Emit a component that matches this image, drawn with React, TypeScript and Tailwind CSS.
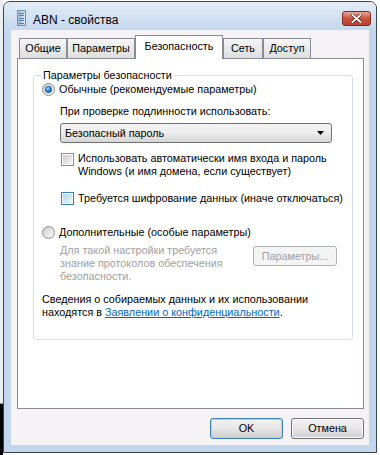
import React from "react";

const Radio = ({ checked }: { checked?: boolean }) => (
  <svg width="13" height="13" viewBox="0 0 13 13" className="shrink-0">
    <defs>
      <linearGradient id={checked ? "rg1" : "rg0"} x1="0" y1="0" x2="1" y2="1">
        <stop offset="0" stopColor="#c9c9c9" />
        <stop offset="1" stopColor="#ffffff" />
      </linearGradient>
      <radialGradient id="rdot" cx="0.4" cy="0.35" r="0.7">
        <stop offset="0" stopColor="#a8dcff" />
        <stop offset="0.5" stopColor="#2f8ad6" />
        <stop offset="1" stopColor="#0c4f8c" />
      </radialGradient>
    </defs>
    <circle cx="6.5" cy="6.5" r="6" fill={`url(#${checked ? "rg1" : "rg0"})`} stroke="#8e8f8f" strokeWidth="1" />
    {checked && <circle cx="6.5" cy="6.5" r="3.2" fill="url(#rdot)" stroke="#1b5b94" strokeWidth="0.6" />}
  </svg>
);

const Check = ({ focus }: { focus?: boolean }) => (
  <div
    className={
      "w-[13px] h-[13px] shrink-0 border p-[1px] bg-white " +
      (focus ? "border-[#3c7fb1]" : "border-[#8f8f8f]")
    }
  >
    <div
      className={
        "w-full h-full bg-gradient-to-br " +
        (focus ? "from-[#a9d7f6] to-[#e8f6fe]" : "from-[#cbcbcb] to-[#f6f6f6]")
      }
    />
  </div>
);

export default function App() {
  return (
    <div className="w-[380px] h-[455px] bg-white flex overflow-hidden font-['Liberation_Sans',Arial,sans-serif] text-[10.8px] leading-[13px] text-black">
      <div className="w-[3px] h-full flex flex-col shrink-0">
        <div className="h-[403px] bg-[#eceff2]" />
        <div className="h-[1px] bg-[#9a9a9a]" />
        <div className="flex-1 bg-black" />
      </div>
      <div className="mt-[1px] w-[374px] h-[452px] shrink-0 rounded-t-[7px] border border-[#3b4550] bg-[#c2d6ee] flex flex-col">
        {/* title bar */}
        <div className="h-[28px] flex items-start rounded-t-[6px] bg-gradient-to-b from-[#e3ecf6] to-[#c6d8ee]">
          <div className="ml-[13px] mt-[8px] w-[9px] h-[16px] border border-[#6e8fb1] bg-gradient-to-r from-[#9db8d6] to-[#dbe7f3] flex flex-col justify-evenly px-[1px]">
            <div className="h-[1px] bg-[#5b7da3]" />
            <div className="h-[1px] bg-[#5b7da3]" />
            <div className="h-[1px] bg-[#5b7da3]" />
            <div className="h-[1px] bg-[#5b7da3]" />
            <div className="h-[1px] bg-[#5b7da3]" />
          </div>
          <div className="ml-[7px] mt-[11px] text-[12px] leading-[14px] text-black">ABN - свойства</div>
          <div className="ml-auto mr-[5px] mt-[9px] w-[29px] h-[15px] rounded-[3px] border border-[#7b2a22] bg-gradient-to-b from-[#e8a596] via-[#c9513f] to-[#b9412f] flex items-center justify-center">
            <svg width="11" height="9" viewBox="0 0 11 9">
              <path d="M1.5 1 L9.5 8 M9.5 1 L1.5 8" stroke="#5a1a14" strokeWidth="3.2" strokeLinecap="square" />
              <path d="M1.5 1 L9.5 8 M9.5 1 L1.5 8" stroke="#ffffff" strokeWidth="1.8" strokeLinecap="square" />
            </svg>
          </div>
        </div>
        {/* client */}
        <div className="mx-[7px] h-[415px] bg-[#f5f3f6] flex flex-col">
          {/* tabs */}
          <div className="h-[28px] pl-[8px] flex items-end">
            {[
              { t: "Общие", w: "w-[48px]" },
              { t: "Параметры", w: "w-[68px]" },
            ].map((x) => (
              <div
                key={x.t}
                className={`${x.w} h-[20px] border border-b-0 border-[#898c95] bg-gradient-to-b from-[#f6f6f6] to-[#dedede] flex items-center justify-center`}
              >
                {x.t}
              </div>
            ))}
            <div className="relative z-10 w-[88px] h-[24px] -mb-[1px] border border-b-0 border-[#898c95] bg-white flex items-center justify-center pb-[2px]">
              Безопасность
            </div>
            <div className="w-[40px] h-[20px] border border-b-0 border-[#898c95] bg-gradient-to-b from-[#f6f6f6] to-[#dedede] flex items-center justify-center">
              Сеть
            </div>
            <div className="w-[48px] h-[20px] border border-b-0 border-[#898c95] bg-gradient-to-b from-[#f6f6f6] to-[#dedede] flex items-center justify-center">
              Доступ
            </div>
          </div>
          {/* panel */}
          <div className="ml-[6px] mr-[5px] h-[351px] border border-[#898c95] bg-white flex flex-col">
            <fieldset className="ml-[15px] mt-[10px] w-[320px] h-[271px] border border-[#d5dfe5] rounded-[3px] flex flex-col">
              <legend className="ml-[7px] px-[2px] leading-[13px]">Параметры безопасности</legend>
              <div className="mt-[1px] ml-[8px] flex items-center h-[13px]">
                <Radio checked />
                <span className="ml-[4px]">Обычные (рекомендуемые параметры)</span>
              </div>
              <div className="mt-[9px] ml-[26px]">При проверке подлинности использовать:</div>
              <div className="mt-[5px] ml-[26px] w-[272px] h-[20px] rounded-[3px] border border-[#707070] bg-gradient-to-b from-[#f4f4f4] via-[#ebebeb] to-[#d6d6d6] flex items-center pl-[4px] pr-[7px]">
                <span>Безопасный пароль</span>
                <svg className="ml-auto" width="7" height="4" viewBox="0 0 7 4">
                  <path d="M0 0 H7 L3.5 4 Z" fill="#000" />
                </svg>
              </div>
              <div className="mt-[9px] ml-[27px] flex items-start">
                <div className="mt-[1px]">
                  <Check />
                </div>
                <div className="ml-[4px]">
                  <div>Использовать автоматически имя входа и пароль</div>
                  <div>Windows (и имя домена, если существует)</div>
                </div>
              </div>
              <div className="mt-[14px] ml-[27px] flex items-center h-[13px]">
                <Check focus />
                <span className="ml-[4px]">Требуется шифрование данных (иначе отключаться)</span>
              </div>
              <div className="mt-[21px] ml-[8px] flex items-center h-[13px]">
                <Radio />
                <span className="ml-[4px]">Дополнительные (особые параметры)</span>
              </div>
              <div className="mt-[5px] ml-[26px] flex items-start">
                <div className="w-[180px] text-[#a0a0a0]">
                  <div>Для такой настройки требуется</div>
                  <div>знание протоколов обеспечения</div>
                  <div>безопасности.</div>
                </div>
                <div className="ml-[13px] mt-[2px] w-[84px] h-[20px] rounded-[3px] border border-[#adb2b5] bg-[#f4f4f4] text-[#a0a0a0] flex items-center justify-center">
                  Параметры...
                </div>
              </div>
              <div className="mt-[10px] ml-[8px]">
                <div>Сведения о собираемых данных и их использовании</div>
                <div>
                  находятся в{" "}
                  <span className="text-[#0066cc] underline">Заявлении о конфиденциальности</span>.
                </div>
              </div>
            </fieldset>
          </div>
          {/* buttons */}
          <div className="mt-[9px] mr-[5px] flex justify-end gap-[8px]">
            <div className="w-[73px] h-[21px] rounded-[3px] border border-[#3c7fb1] bg-gradient-to-b from-[#f2f2f2] via-[#e6e6e6] to-[#cfcfcf] flex items-center justify-center shadow-[inset_0_0_0_1px_#a7d9f5]">
              OK
            </div>
            <div className="w-[73px] h-[21px] rounded-[3px] border border-[#707070] bg-gradient-to-b from-[#f2f2f2] via-[#e6e6e6] to-[#cfcfcf] flex items-center justify-center shadow-[inset_0_0_0_1px_#fbfbfb]">
              Отмена
            </div>
          </div>
        </div>
      </div>
    </div>
  );
}
